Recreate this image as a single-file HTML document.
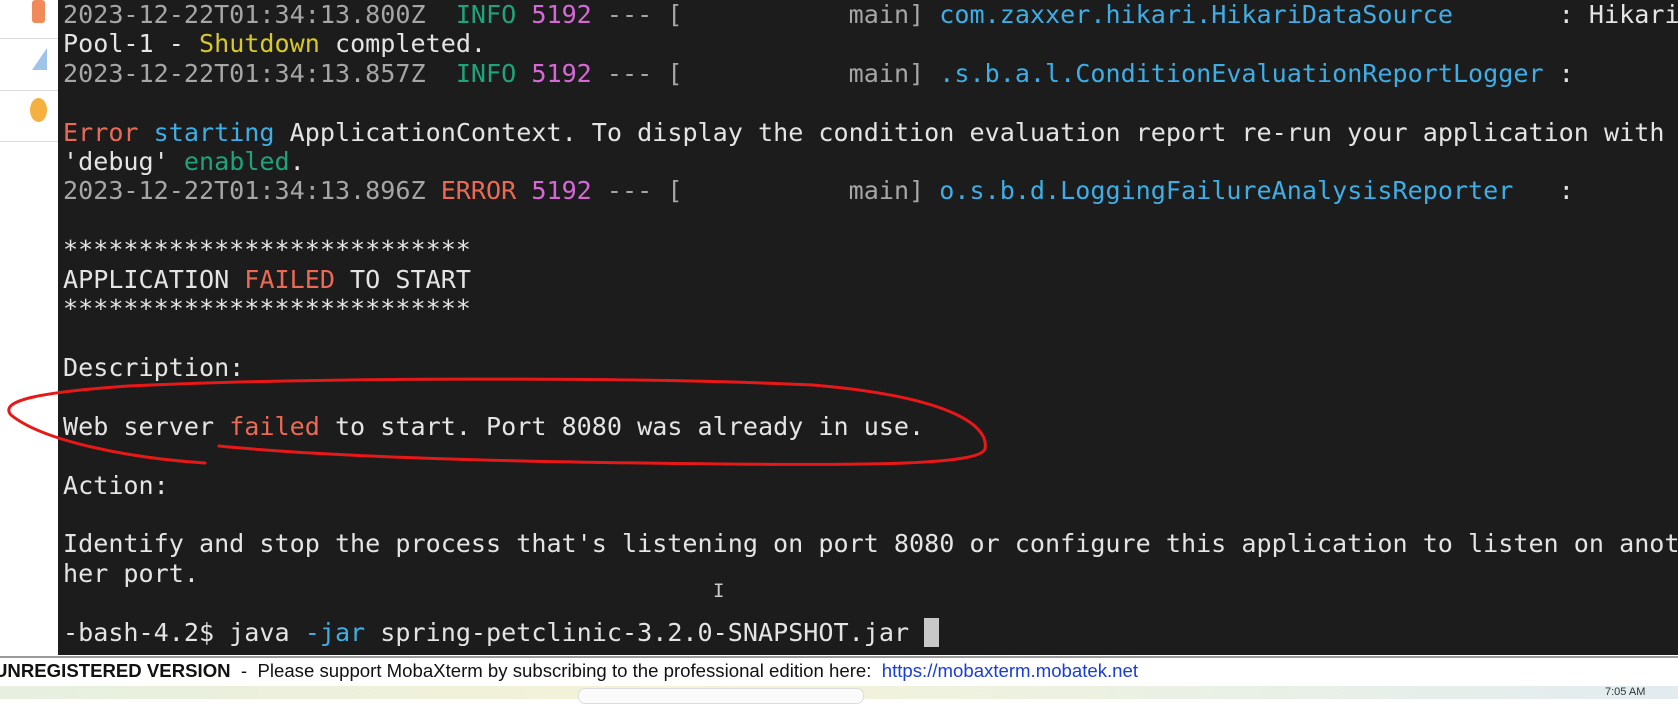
<!DOCTYPE html>
<html><head><meta charset="utf-8"><style>
html,body{margin:0;padding:0;width:1678px;height:699px;overflow:hidden;background:#fff;}
#term{position:absolute;left:58px;top:0;width:1620px;height:655px;background:#1c1c1c;overflow:hidden;}
#txt{position:absolute;left:5px;top:0;font-family:"DejaVu Sans Mono","Liberation Mono",monospace;font-size:25.1px;line-height:29.4px;color:#e4e4e4;white-space:pre;}
.g{color:#a6a6a6}.n{color:#1fa37a}.m{color:#d868d8}.b{color:#3eaee6}.r{color:#ec6a55}.y{color:#d8c828}
#left{position:absolute;left:0;top:0;width:58px;height:655px;background:#fff;}
#status{position:absolute;left:0;top:656px;width:1678px;height:28px;background:#fff;border-top:2px solid #9a9a9a;font-family:"Liberation Sans",sans-serif;font-size:18.6px;line-height:26px;color:#111;white-space:nowrap;}
#task{position:absolute;left:0;top:686px;width:1678px;height:13px;background:linear-gradient(90deg,#e6efe0,#f4f2d8 40%,#eaf1e4 70%,#e2ecef);}
</style></head><body>
<div id="left">
 <div style="position:absolute;left:32px;top:0;width:13px;height:23px;background:#f08a5a;border-radius:3px"></div>
 <div style="position:absolute;left:0;top:38px;width:58px;height:1px;background:#ddd"></div>
 <div style="position:absolute;left:32px;top:48px;width:0;height:0;border-left:15px solid transparent;border-bottom:22px solid #9ec4ea"></div>
 <div style="position:absolute;left:0;top:90px;width:58px;height:1px;background:#ddd"></div>
 <div style="position:absolute;left:30px;top:98px;width:17px;height:24px;background:#f5b040;border-radius:50%"></div>
 <div style="position:absolute;left:0;top:141px;width:58px;height:1px;background:#ddd"></div>
</div>
<div id="term"><div id="txt"><span class="g">2023-12-22T01:34:13.800Z</span>  <span class="n">INFO</span> <span class="m">5192</span> <span class="g">--- [           main]</span> <span class="b">com.zaxxer.hikari.HikariDataSource</span>       : Hikari
Pool-1 - <span class="y">Shutdown</span> completed.
<span class="g">2023-12-22T01:34:13.857Z</span>  <span class="n">INFO</span> <span class="m">5192</span> <span class="g">--- [           main]</span> <span class="b">.s.b.a.l.ConditionEvaluationReportLogger</span> :

<span class="r">Error</span> <span class="b">starting</span> ApplicationContext. To display the condition evaluation report re-run your application with
'debug' <span class="n">enabled</span>.
<span class="g">2023-12-22T01:34:13.896Z</span> <span class="r">ERROR</span> <span class="m">5192</span> <span class="g">--- [           main]</span> <span class="b">o.s.b.d.LoggingFailureAnalysisReporter</span>   :

***************************
APPLICATION <span class="r">FAILED</span> TO START
***************************

Description:

Web server <span class="r">failed</span> to start. Port 8080 was already in use.

Action:

Identify and stop the process that's listening on port 8080 or configure this application to listen on anot
her port.

-bash-4.2$ java <span class="b">-jar</span> spring-petclinic-3.2.0-SNAPSHOT.jar <span style="background:#c8c8c8">&nbsp;</span></div>
<div style="position:absolute;left:655px;top:580px;color:#ccc;font-family:'DejaVu Sans Mono',monospace;font-size:19px">I</div>
</div>
<svg style="position:absolute;left:0;top:0" width="1678" height="699">
<path d="M205,463 C128,458 43,441 11,415 C-2,400 43,392 128,386 C321,377 642,377 813,385 C942,396 990,423 985,449 C979,466 856,466 642,463 C481,461 321,456 219,446" fill="none" stroke="#e81818" stroke-width="3" stroke-linecap="round"/>
</svg>
<div id="status"><span style="margin-left:-6px;font-weight:bold">UNREGISTERED VERSION</span>&nbsp; - &nbsp;Please support MobaXterm by subscribing to the professional edition here:&nbsp; <span style="color:#1a3cd8">https://mobaxterm.mobatek.net</span></div>
<div id="task">
 <div style="position:absolute;left:578px;top:2px;width:284px;height:14px;background:#fbfbfb;border-radius:7px;border:1px solid #ddd"></div>
 <div style="position:absolute;left:1605px;top:0;font:11px 'Liberation Sans',sans-serif;color:#333">7:05 AM</div>
</div>
</body></html>
